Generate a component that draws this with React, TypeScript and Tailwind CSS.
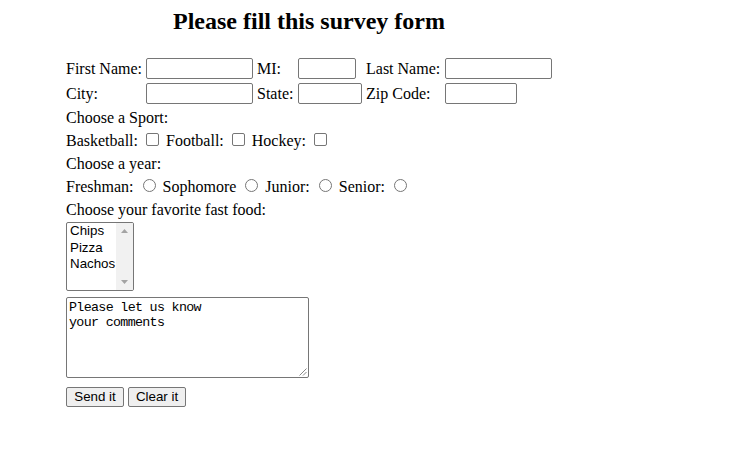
import { ReactNode } from "react";

const serif = { fontFamily: '"Liberation Serif", "Times New Roman", serif' };

const TextBox = ({ w }: { w: string }) => <div className={`h-[21px] ${w} self-center rounded-[2px] border border-[#767676] bg-white`} />;

const Label = ({ children }: { children: ReactNode }) => <div className="whitespace-nowrap leading-[25px]">{children}</div>;

const Check = () => <span className="mb-0 ml-[4px] mr-[3px] inline-block h-[13px] w-[13px] rounded-[2px] border border-[#767676] bg-white align-baseline" />;

const Radio = () => <span className="mb-0 ml-[5px] mr-[3px] inline-block h-[13px] w-[13px] rounded-full border border-[#767676] bg-white align-baseline" />;

export default function App() {
  return (
    <div className="min-h-[463px] w-full bg-white text-[16px] text-black" style={serif}>
      <div className="ml-[66px] w-[486px]">
        {/* title */}
        <h2 className="h-[56px] pt-[8px] text-center text-[24px] font-bold leading-[27px]">Please fill this survey form</h2>

        {/* name / address */}
        <div className="grid grid-cols-[80px_111px_41px_68px_79px_107px] grid-rows-[25px_25px]">
          <Label>First Name:</Label>
          <TextBox w="w-[107px]" />
          <Label>MI:</Label>
          <TextBox w="w-[58px]" />
          <Label>Last Name:</Label>
          <TextBox w="w-[107px]" />

          <Label>City:</Label>
          <TextBox w="w-[107px]" />
          <Label>State:</Label>
          <TextBox w="w-[64px]" />
          <Label>Zip Code:</Label>
          <TextBox w="w-[72px]" />
        </div>

        <div className="h-[23px] whitespace-nowrap leading-[23px]">Choose a Sport:</div>
        <div className="h-[23px] whitespace-nowrap leading-[23px]">
          Basketball: <Check /> Football: <Check /> Hockey: <Check />
        </div>
        <div className="h-[23px] whitespace-nowrap leading-[23px]">Choose a year:</div>
        <div className="h-[23px] whitespace-nowrap leading-[23px]">
          Freshman: <Radio /> Sophomore <Radio /> Junior: <Radio /> Senior: <Radio />
        </div>
        <div className="h-[23px] whitespace-nowrap leading-[23px]">Choose your favorite fast food:</div>

        {/* listbox */}
        <div className="mt-[1px] flex h-[69px] w-[68px] overflow-hidden rounded-[2px] border border-[#767676] bg-white" style={{ fontFamily: '"Liberation Sans", Arial, sans-serif' }}>
          <div className="flex-1 pl-[3px] text-[13.33px] leading-[16.5px]">
            <div>Chips</div>
            <div>Pizza</div>
            <div>Nachos</div>
          </div>
          <div className="flex w-[17px] flex-col items-center justify-between bg-[#f1f1f1] py-[6px]">
            <svg width="7" height="4" viewBox="0 0 7 4">
              <path d="M0 4 L3.5 0 L7 4 Z" fill="#a3a3a3" />
            </svg>
            <svg width="7" height="4" viewBox="0 0 7 4">
              <path d="M0 0 L7 0 L3.5 4 Z" fill="#a3a3a3" />
            </svg>
          </div>
        </div>

        {/* comments */}
        <div className="relative mt-[6px] h-[81px] w-[243px] rounded-[2px] border border-[#767676] bg-white p-[2px] text-[13.33px] leading-[15px] tracking-[-0.67px] whitespace-pre" style={{ fontFamily: '"Liberation Mono", "Courier New", monospace' }}>
          {"Please let us know\nyour comments"}
          <svg className="absolute bottom-[1px] right-[1px]" width="9" height="9" viewBox="0 0 9 9">
            <path d="M8.5 1.5 L1.5 8.5 M8.5 5 L5 8.5" stroke="#888" strokeWidth="1" />
          </svg>
        </div>

        {/* buttons */}
        <div className="mt-[9px] flex gap-[4px]" style={{ fontFamily: '"Liberation Sans", Arial, sans-serif' }}>
          <button className="h-[20px] w-[58px] rounded-[2px] border border-[#767676] bg-[#efefef] text-[13.33px] leading-[18px]">Send it</button>
          <button className="h-[20px] w-[58px] rounded-[2px] border border-[#767676] bg-[#efefef] text-[13.33px] leading-[18px]">Clear it</button>
        </div>
      </div>
    </div>
  );
}
